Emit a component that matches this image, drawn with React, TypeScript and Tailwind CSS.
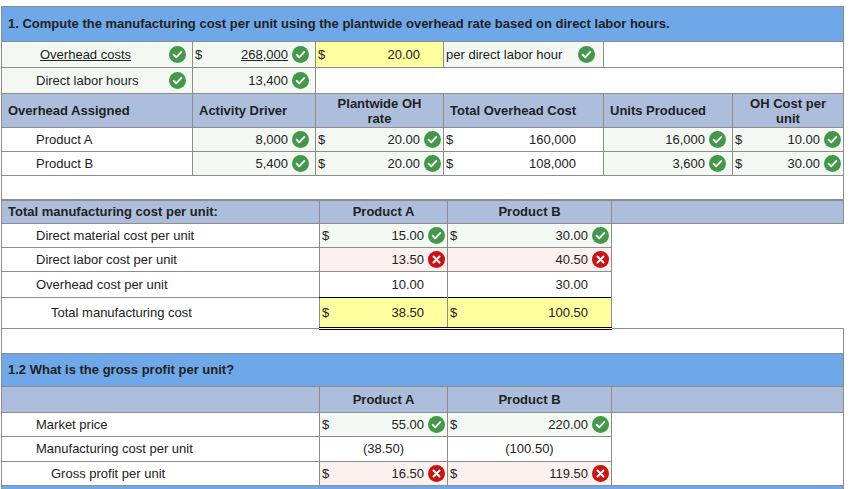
import { FC, ReactNode } from 'react';

const Ok: FC = () => (
  <svg width="17" height="17" viewBox="0 0 20 20" className="inline-block shrink-0">
    <circle cx="10" cy="10" r="10" fill="#43984a" />
    <path d="M5.5 10.3l3 3 6-6.3" stroke="#fff" strokeWidth="2.2" fill="none" strokeLinecap="round" strokeLinejoin="round" />
  </svg>
);

const Bad: FC = () => (
  <svg width="17" height="17" viewBox="0 0 20 20" className="inline-block shrink-0">
    <circle cx="10" cy="10" r="10" fill="#cc1111" />
    <path d="M6.5 6.5l7 7M13.5 6.5l-7 7" stroke="#fff" strokeWidth="2.4" strokeLinecap="round" />
  </svg>
);

const B = 'border border-[#8c8c8c] p-0';

// money cell: "$" on left, value right, optional mark
const Money: FC<{ d?: boolean; v: ReactNode; mark?: ReactNode; cls?: string; u?: boolean; pr?: string }> = ({
  d,
  v,
  mark,
  cls = '',
  u,
  pr = 'pr-1',
}) => (
  <td className={`${B} ${cls} px-0.5`}>
    <div className={`flex items-center ${pr}`}>
      <span className="w-3">{d ? '$' : ''}</span>
      <span className={`flex-1 text-right ${u ? 'underline' : ''}`}>{v}</span>
      {mark ? <span className="ml-1 flex">{mark}</span> : <span className="w-[21px]" />}
    </div>
  </td>
);

const App: FC = () => {
  return (
    <div className="bg-white w-[866px] h-[489px] overflow-hidden pt-[6px] pl-[1px] text-[13px] leading-4 whitespace-nowrap text-[#222]" style={{ fontFamily: '"Liberation Sans", Arial, sans-serif' }}>
      <table className="border-collapse table-fixed w-[842px]">
        <colgroup>
          <col className="w-[191px]" />
          <col className="w-[123px]" />
          <col className="w-[128px]" />
          <col className="w-[160px]" />
          <col className="w-[129px]" />
          <col className="w-[111px]" />
        </colgroup>
        <tbody>
          <tr className="h-[35px] bg-[#6fa8e8]">
            <td colSpan={6} className={`${B} px-1.5 font-bold`}>1. Compute the manufacturing cost per unit using the plantwide overhead rate based on direct labor hours.</td>
          </tr>
          <tr className="h-[26px]">
            <td className={`${B} bg-[#f3f9f2]`}>
              <div className="flex items-center justify-between pl-[38px] pr-1.5"><span className="underline">Overhead costs</span><Ok /></div>
            </td>
            <Money d v="268,000" u mark={<Ok />} cls="bg-[#f3f9f2]" />
            <Money d v="20.00" cls="bg-[#ffff9f]" pr="pr-0" />
            <td className={`${B} bg-[#f3f9f2]`}>
              <div className="flex items-center justify-between px-0.5 pr-2"><span>per direct labor hour</span><Ok /></div>
            </td>
            <td colSpan={2} className={B} />
          </tr>
          <tr className="h-[26px]">
            <td className={`${B} bg-[#f3f9f2]`}>
              <div className="flex items-center justify-between pl-[34px] pr-1.5"><span>Direct labor hours</span><Ok /></div>
            </td>
            <Money v="13,400" mark={<Ok />} cls="bg-[#f3f9f2]" />
            <td colSpan={4} className={B} />
          </tr>
          <tr className="h-[34px] bg-[#adbedc] font-bold">
            <td className={`${B} px-1.5`}>Overhead Assigned</td>
            <td className={`${B} px-1.5`}>Activity Driver</td>
            <td className={`${B} text-center leading-[15px]`}>Plantwide OH<br />rate</td>
            <td className={`${B} px-1.5`}>Total Overhead Cost</td>
            <td className={`${B} px-1.5`}>Units Produced</td>
            <td className={`${B} text-center leading-[15px]`}>OH Cost per<br />unit</td>
          </tr>
          {[
            ['Product A', '8,000', '160,000', '16,000', '10.00'],
            ['Product B', '5,400', '108,000', '3,600', '30.00'],
          ].map((r) => (
            <tr key={r[0]} className="h-[24px]">
              <td className={`${B} pl-[34px]`}>{r[0]}</td>
              <Money v={r[1]} mark={<Ok />} cls="bg-[#f3f9f2]" />
              <Money d v="20.00" mark={<Ok />} cls="bg-[#f3f9f2]" pr="pr-0" />
              <Money d v={r[2]} cls="" pr="pr-[4px]" />
              <Money v={r[3]} mark={<Ok />} cls="bg-[#f3f9f2]" />
              <Money d v={r[4]} mark={<Ok />} cls="bg-[#f3f9f2]" pr="pr-0" />
            </tr>
          ))}
          <tr className="h-[24px]"><td colSpan={6} className={B} /></tr>
        </tbody>
      </table>

      <table className="border-collapse table-fixed w-[842px]">
        <colgroup>
          <col className="w-[318px]" />
          <col className="w-[128px]" />
          <col className="w-[164px]" />
          <col className="w-[232px]" />
        </colgroup>
        <tbody>
          <tr className="h-[23px] bg-[#adbedc] font-bold">
            <td className={`${B} px-1.5`}>Total manufacturing cost per unit:</td>
            <td className={`${B} text-center`}>Product A</td>
            <td className={`${B} text-center`}>Product B</td>
            <td className={B} />
          </tr>
          <tr className="h-[24px]">
            <td className={`${B} pl-[34px]`}>Direct material cost per unit</td>
            <Money d v="15.00" mark={<Ok />} cls="bg-[#f3f9f2]" pr="pr-0" />
            <Money d v="30.00" mark={<Ok />} cls="bg-[#f3f9f2]" pr="pr-0" />
            <td className="border-l border-[#8c8c8c]" />
          </tr>
          <tr className="h-[24px]">
            <td className={`${B} pl-[34px]`}>Direct labor cost per unit</td>
            <Money v="13.50" mark={<Bad />} cls="bg-[#fdf1f0]" pr="pr-0" />
            <Money v="40.50" mark={<Bad />} cls="bg-[#fdf1f0]" pr="pr-0" />
            <td className="border-l border-[#8c8c8c]" />
          </tr>
          <tr className="h-[26px]">
            <td className={`${B} pl-[34px]`}>Overhead cost per unit</td>
            <Money v="10.00" pr="pr-0" />
            <Money v="30.00" pr="pr-0" />
            <td className="border-l border-[#8c8c8c]" />
          </tr>
          <tr className="h-[31px]">
            <td className={`${B} pl-[49px]`}>Total manufacturing cost</td>
            <Money d v="38.50" cls="bg-[#ffff9f] border-t-black border-b-[3px] border-b-black border-double" pr="pr-0" />
            <Money d v="100.50" cls="bg-[#ffff9f] border-t-black border-b-[3px] border-b-black border-double" pr="pr-0" />
            <td className="border-l border-[#8c8c8c]" />
          </tr>
          <tr className="h-[25px]"><td colSpan={4} className={B} /></tr>
          <tr className="h-[33px] bg-[#6fa8e8]">
            <td colSpan={4} className={`${B} px-1.5 font-bold`}>1.2 What is the gross profit per unit?</td>
          </tr>
          <tr className="h-[26px] bg-[#adbedc] font-bold">
            <td className={B} />
            <td className={`${B} text-center`}>Product A</td>
            <td className={`${B} text-center`}>Product B</td>
            <td className={B} />
          </tr>
          <tr className="h-[24px]">
            <td className={`${B} pl-[34px]`}>Market price</td>
            <Money d v="55.00" mark={<Ok />} cls="bg-[#f3f9f2]" pr="pr-0" />
            <Money d v="220.00" mark={<Ok />} cls="bg-[#f3f9f2]" pr="pr-0" />
            <td className="border-l border-[#8c8c8c] border-r" />
          </tr>
          <tr className="h-[25px]">
            <td className={`${B} pl-[34px]`}>Manufacturing cost per unit</td>
            <td className={`${B} text-center`}>(38.50)</td>
            <td className={`${B} text-center`}>(100.50)</td>
            <td className="border-l border-r border-[#8c8c8c]" />
          </tr>
          <tr className="h-[24px]">
            <td className={`${B} pl-[49px]`}>Gross profit per unit</td>
            <Money d v="16.50" mark={<Bad />} cls="bg-[#fdf1f0] border-t-black" pr="pr-0" />
            <Money d v="119.50" mark={<Bad />} cls="bg-[#fdf1f0] border-t-black" pr="pr-0" />
            <td className="border-l border-r border-[#8c8c8c]" />
          </tr>
          <tr className="h-[6px] bg-[#6fa8e8]"><td colSpan={4} className={B} /></tr>
        </tbody>
      </table>
    </div>
  );
};

export default App;
